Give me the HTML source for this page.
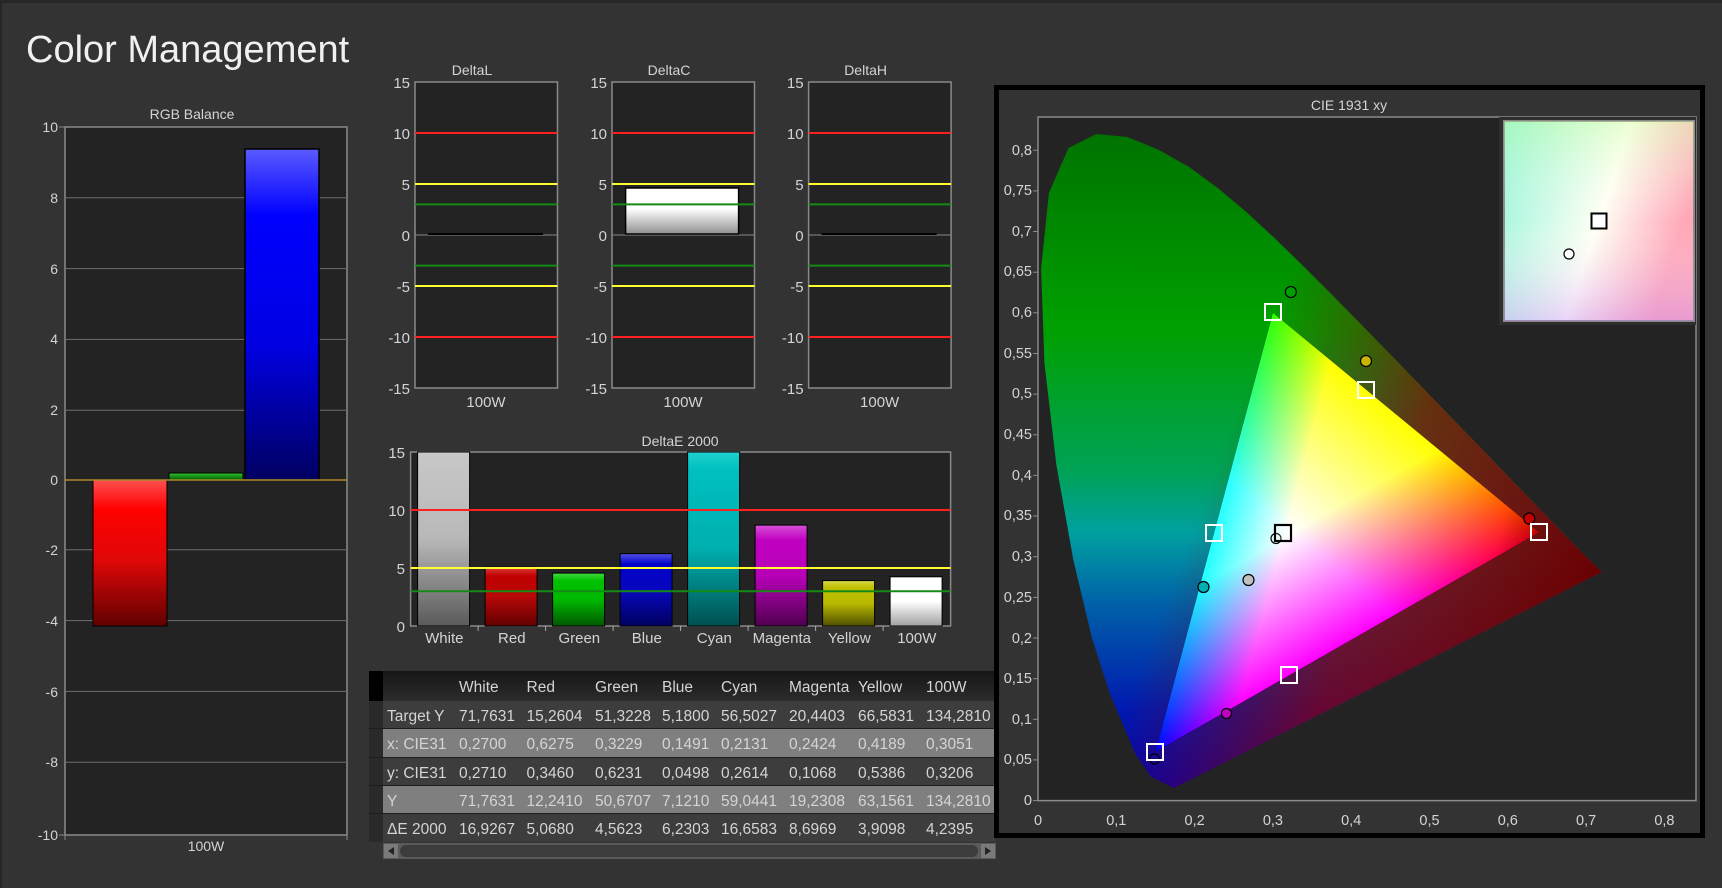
<!DOCTYPE html>
<html><head><meta charset="utf-8"><style>
html,body{margin:0;padding:0;background:#333;}
svg{display:block;}
text{font-family:"Liberation Sans",sans-serif;fill:#d4d4d4;}
</style></head><body>
<svg width="1722" height="888" viewBox="0 0 1722 888" xmlns="http://www.w3.org/2000/svg">
<defs>
<linearGradient id="rRed" x1="0" y1="0" x2="0" y2="1"><stop offset="0" stop-color="#ff5050"/><stop offset="0.2" stop-color="#ff0000"/><stop offset="0.55" stop-color="#e00808"/><stop offset="1" stop-color="#600000"/></linearGradient>
<linearGradient id="rBlue" x1="0" y1="0" x2="0" y2="1"><stop offset="0" stop-color="#5a5aff"/><stop offset="0.2" stop-color="#0000ff"/><stop offset="0.6" stop-color="#0000e0"/><stop offset="1" stop-color="#000060"/></linearGradient>
<linearGradient id="rGreen" x1="0" y1="0" x2="0" y2="1"><stop offset="0" stop-color="#30c030"/><stop offset="1" stop-color="#006000"/></linearGradient>
<linearGradient id="wC" x1="0" y1="0" x2="0" y2="1"><stop offset="0" stop-color="#ffffff"/><stop offset="0.45" stop-color="#ffffff"/><stop offset="1" stop-color="#909090"/></linearGradient>
<linearGradient id="eW" x1="0" y1="0" x2="0" y2="1"><stop offset="0" stop-color="#c8c8c8"/><stop offset="0.5" stop-color="#b8b8b8"/><stop offset="1" stop-color="#5a5a5a"/></linearGradient>
<linearGradient id="eR" x1="0" y1="0" x2="0" y2="1"><stop offset="0" stop-color="#e04040"/><stop offset="0.15" stop-color="#c00000"/><stop offset="0.5" stop-color="#b80808"/><stop offset="1" stop-color="#600000"/></linearGradient>
<linearGradient id="eG" x1="0" y1="0" x2="0" y2="1"><stop offset="0" stop-color="#40d840"/><stop offset="0.15" stop-color="#00c000"/><stop offset="0.5" stop-color="#00b800"/><stop offset="1" stop-color="#005800"/></linearGradient>
<linearGradient id="eB" x1="0" y1="0" x2="0" y2="1"><stop offset="0" stop-color="#5050e8"/><stop offset="0.15" stop-color="#0000c8"/><stop offset="0.5" stop-color="#0808c0"/><stop offset="1" stop-color="#000060"/></linearGradient>
<linearGradient id="eC" x1="0" y1="0" x2="0" y2="1"><stop offset="0" stop-color="#20d0d0"/><stop offset="0.1" stop-color="#00c0c0"/><stop offset="0.55" stop-color="#00b0b0"/><stop offset="1" stop-color="#005050"/></linearGradient>
<linearGradient id="eM" x1="0" y1="0" x2="0" y2="1"><stop offset="0" stop-color="#d850d8"/><stop offset="0.15" stop-color="#c000c0"/><stop offset="0.5" stop-color="#b800b8"/><stop offset="1" stop-color="#500050"/></linearGradient>
<linearGradient id="eY" x1="0" y1="0" x2="0" y2="1"><stop offset="0" stop-color="#d8d850"/><stop offset="0.15" stop-color="#c0c000"/><stop offset="0.5" stop-color="#b8b800"/><stop offset="1" stop-color="#505000"/></linearGradient>
<linearGradient id="eWh" x1="0" y1="0" x2="0" y2="1"><stop offset="0" stop-color="#ffffff"/><stop offset="0.5" stop-color="#ffffff"/><stop offset="1" stop-color="#a0a0a0"/></linearGradient>
<linearGradient id="hdr" x1="0" y1="0" x2="0" y2="1"><stop offset="0" stop-color="#161616"/><stop offset="1" stop-color="#2c2c2c"/></linearGradient>

<linearGradient id="horse" gradientUnits="userSpaceOnUse" x1="0" y1="130" x2="0" y2="790">
<stop offset="0" stop-color="#007200"/><stop offset="0.3" stop-color="#00a000"/><stop offset="0.52" stop-color="#00a258"/><stop offset="0.61" stop-color="#00a0a0"/><stop offset="0.72" stop-color="#0060a8"/><stop offset="0.88" stop-color="#0018b0"/><stop offset="1" stop-color="#0000b0"/></linearGradient>
<linearGradient id="redov" gradientUnits="userSpaceOnUse" x1="1230" y1="430" x2="1600" y2="570">
<stop offset="0" stop-color="#8a0000" stop-opacity="0"/><stop offset="0.45" stop-color="#900000" stop-opacity="0.7"/><stop offset="1" stop-color="#6a0000" stop-opacity="1"/></linearGradient>
<linearGradient id="gR" gradientUnits="userSpaceOnUse" x1="1539.1" y1="532.3" x2="1235.9" y2="451.2"><stop offset="0" stop-color="#c00000"/><stop offset="0.12" stop-color="#ff0000"/><stop offset="0.78" stop-color="#ff0000"/><stop offset="1" stop-color="#000000"/></linearGradient>
<linearGradient id="gG" gradientUnits="userSpaceOnUse" x1="1272.9" y1="312.8" x2="1433.2" y2="592.9"><stop offset="0" stop-color="#30ff00"/><stop offset="0.62" stop-color="#20ff00"/><stop offset="1" stop-color="#000000"/></linearGradient>
<linearGradient id="gB" gradientUnits="userSpaceOnUse" x1="1155.5" y1="751.8" x2="1418.5" y2="432.8"><stop offset="0" stop-color="#0000ff"/><stop offset="0.62" stop-color="#0000ff"/><stop offset="1" stop-color="#000000"/></linearGradient>
<linearGradient id="ins1" x1="0" y1="0" x2="1" y2="0.35"><stop offset="0" stop-color="#90f4d8"/><stop offset="0.6" stop-color="#fffff4"/><stop offset="1" stop-color="#ffa8b8"/></linearGradient>
<linearGradient id="ins2" x1="0" y1="0" x2="0" y2="1"><stop offset="0" stop-color="#c8ff90" stop-opacity="0.35"/><stop offset="0.5" stop-color="#ffffff" stop-opacity="0"/><stop offset="1" stop-color="#c080ff" stop-opacity="0.35"/></linearGradient>
</defs>

<rect x="0" y="0" width="1722" height="3" fill="#262626"/>
<rect x="0" y="0" width="2" height="888" fill="#262626"/>
<text x="26" y="62" font-size="38" style="fill:#f0f0f0">Color Management</text>

<!-- RGB Balance -->
<text x="192" y="119" font-size="14" text-anchor="middle">RGB Balance</text>
<rect x="65" y="127" width="282" height="708" fill="#232323" stroke="#8a8a8a" stroke-width="1.5"/>
<g stroke="#707070" stroke-width="1">
<line x1="65" x2="347" y1="197.8" y2="197.8"/><line x1="65" x2="347" y1="268.6" y2="268.6"/><line x1="65" x2="347" y1="339.4" y2="339.4"/><line x1="65" x2="347" y1="410.2" y2="410.2"/>
<line x1="65" x2="347" y1="549.8" y2="549.8"/><line x1="65" x2="347" y1="620.6" y2="620.6"/><line x1="65" x2="347" y1="691.4" y2="691.4"/><line x1="65" x2="347" y1="762.2" y2="762.2"/>
</g>
<g stroke="#8a8a8a"><line x1="59" x2="65" y1="127" y2="127"/><line x1="59" x2="65" y1="835" y2="835"/><line x1="65" x2="65" y1="835" y2="840"/><line x1="347" x2="347" y1="835" y2="840"/></g>
<rect x="93" y="480" width="74" height="146" fill="url(#rRed)" stroke="#000" stroke-width="1"/>
<rect x="169" y="473" width="74" height="7" fill="url(#rGreen)" stroke="#000" stroke-width="1"/>
<rect x="245" y="149" width="74" height="331" fill="url(#rBlue)" stroke="#000" stroke-width="1.5"/>
<line x1="65" x2="347" y1="480" y2="480" stroke="#b08a2a" stroke-width="1.5"/>
<g font-size="14" text-anchor="end">
<text x="58" y="132">10</text><text x="58" y="203">8</text><text x="58" y="274">6</text><text x="58" y="344">4</text><text x="58" y="415">2</text><text x="58" y="485">0</text>
<text x="58" y="555">-2</text><text x="58" y="626">-4</text><text x="58" y="697">-6</text><text x="58" y="767">-8</text><text x="58" y="840">-10</text>
</g>
<text x="206" y="851" font-size="14" text-anchor="middle">100W</text>

<!-- Delta charts -->
<g>
<text x="472" y="75" font-size="14" text-anchor="middle">DeltaL</text>
<rect x="415" y="82" width="142.5" height="306" fill="#232323" stroke="#8a8a8a" stroke-width="1.5"/>
<line x1="415" x2="557.5" y1="235" y2="235" stroke="#888"/>
<line x1="428" x2="543" y1="234" y2="234" stroke="#000" stroke-width="2"/>
<line x1="415" x2="557.5" y1="133" y2="133" stroke="#ff2020" stroke-width="2"/>
<line x1="415" x2="557.5" y1="337" y2="337" stroke="#ff2020" stroke-width="2"/>
<line x1="415" x2="557.5" y1="184" y2="184" stroke="#ffff30" stroke-width="2"/>
<line x1="415" x2="557.5" y1="286" y2="286" stroke="#ffff30" stroke-width="2"/>
<line x1="415" x2="557.5" y1="204.4" y2="204.4" stroke="#158a15" stroke-width="2"/>
<line x1="415" x2="557.5" y1="265.6" y2="265.6" stroke="#158a15" stroke-width="2"/>
<g font-size="15" text-anchor="end"><text x="410" y="88">15</text><text x="410" y="139">10</text><text x="410" y="190">5</text><text x="410" y="241">0</text><text x="410" y="292">-5</text><text x="410" y="343">-10</text><text x="410" y="394">-15</text></g>
<text x="486" y="407" font-size="15" text-anchor="middle">100W</text>
</g>
<g transform="translate(197 0)">
<text x="472" y="75" font-size="14" text-anchor="middle">DeltaC</text>
<rect x="415" y="82" width="142.5" height="306" fill="#232323" stroke="#8a8a8a" stroke-width="1.5"/>
<line x1="415" x2="557.5" y1="235" y2="235" stroke="#888"/>
<rect x="428.6" y="188" width="113" height="46" fill="url(#wC)" stroke="#000" stroke-width="1.5"/>
<line x1="415" x2="557.5" y1="133" y2="133" stroke="#ff2020" stroke-width="2"/>
<line x1="415" x2="557.5" y1="337" y2="337" stroke="#ff2020" stroke-width="2"/>
<line x1="415" x2="557.5" y1="184" y2="184" stroke="#ffff30" stroke-width="2"/>
<line x1="415" x2="557.5" y1="286" y2="286" stroke="#ffff30" stroke-width="2"/>
<line x1="415" x2="557.5" y1="204.4" y2="204.4" stroke="#158a15" stroke-width="2"/>
<line x1="415" x2="557.5" y1="265.6" y2="265.6" stroke="#158a15" stroke-width="2"/>
<g font-size="15" text-anchor="end"><text x="410" y="88">15</text><text x="410" y="139">10</text><text x="410" y="190">5</text><text x="410" y="241">0</text><text x="410" y="292">-5</text><text x="410" y="343">-10</text><text x="410" y="394">-15</text></g>
<text x="486" y="407" font-size="15" text-anchor="middle">100W</text>
</g>
<g transform="translate(393.6 0)">
<text x="472" y="75" font-size="14" text-anchor="middle">DeltaH</text>
<rect x="415" y="82" width="142.5" height="306" fill="#232323" stroke="#8a8a8a" stroke-width="1.5"/>
<line x1="415" x2="557.5" y1="235" y2="235" stroke="#888"/>
<line x1="428" x2="543" y1="234" y2="234" stroke="#000" stroke-width="2"/>
<line x1="415" x2="557.5" y1="133" y2="133" stroke="#ff2020" stroke-width="2"/>
<line x1="415" x2="557.5" y1="337" y2="337" stroke="#ff2020" stroke-width="2"/>
<line x1="415" x2="557.5" y1="184" y2="184" stroke="#ffff30" stroke-width="2"/>
<line x1="415" x2="557.5" y1="286" y2="286" stroke="#ffff30" stroke-width="2"/>
<line x1="415" x2="557.5" y1="204.4" y2="204.4" stroke="#158a15" stroke-width="2"/>
<line x1="415" x2="557.5" y1="265.6" y2="265.6" stroke="#158a15" stroke-width="2"/>
<g font-size="15" text-anchor="end"><text x="410" y="88">15</text><text x="410" y="139">10</text><text x="410" y="190">5</text><text x="410" y="241">0</text><text x="410" y="292">-5</text><text x="410" y="343">-10</text><text x="410" y="394">-15</text></g>
<text x="486" y="407" font-size="15" text-anchor="middle">100W</text>
</g>

<!-- DeltaE 2000 -->
<text x="680" y="446" font-size="14" text-anchor="middle">DeltaE 2000</text>
<rect x="410.6" y="452" width="540" height="174" fill="#232323" stroke="#8a8a8a" stroke-width="1.5"/>
<g stroke="#000" stroke-width="1">
<rect x="417.6" y="452" width="52" height="174" fill="url(#eW)"/>
<rect x="485.1" y="567.2" width="52" height="58.8" fill="url(#eR)"/>
<rect x="552.6" y="573.1" width="52" height="52.9" fill="url(#eG)"/>
<rect x="620.1" y="553.7" width="52" height="72.3" fill="url(#eB)"/>
<rect x="687.6" y="452" width="52" height="174" fill="url(#eC)"/>
<rect x="755.1" y="525.1" width="52" height="100.9" fill="url(#eM)"/>
<rect x="822.6" y="580.6" width="52" height="45.4" fill="url(#eY)"/>
<rect x="890.1" y="576.8" width="52" height="49.2" fill="url(#eWh)"/>
</g>
<line x1="410.6" x2="950.6" y1="510" y2="510" stroke="#ff2020" stroke-width="2"/>
<line x1="410.6" x2="950.6" y1="568" y2="568" stroke="#ffff30" stroke-width="2"/>
<line x1="410.6" x2="950.6" y1="591.2" y2="591.2" stroke="#158a15" stroke-width="2"/>
<g stroke="#aaa"><line x1="478.1" x2="478.1" y1="626" y2="631"/><line x1="545.6" x2="545.6" y1="626" y2="631"/><line x1="613.1" x2="613.1" y1="626" y2="631"/><line x1="680.6" x2="680.6" y1="626" y2="631"/><line x1="748.1" x2="748.1" y1="626" y2="631"/><line x1="815.6" x2="815.6" y1="626" y2="631"/><line x1="883.1" x2="883.1" y1="626" y2="631"/></g>
<g font-size="15" text-anchor="end"><text x="405" y="458">15</text><text x="405" y="516">10</text><text x="405" y="574">5</text><text x="405" y="632">0</text></g>
<g font-size="15" text-anchor="middle">
<text x="444.3" y="643">White</text><text x="511.8" y="643">Red</text><text x="579.3" y="643">Green</text><text x="646.8" y="643">Blue</text><text x="714.3" y="643">Cyan</text><text x="781.8" y="643">Magenta</text><text x="849.3" y="643">Yellow</text><text x="916.8" y="643">100W</text>
</g>

<!-- Table -->
<rect x="369" y="671" width="626" height="30" fill="url(#hdr)"/>
<rect x="369" y="671" width="14" height="30" fill="#000"/>
<rect x="369" y="701" width="626" height="28" fill="#3d3d3d"/>
<rect x="369" y="729" width="626" height="29" fill="#7f7f7f"/>
<rect x="369" y="758" width="626" height="28" fill="#3d3d3d"/>
<rect x="369" y="786" width="626" height="28" fill="#7f7f7f"/>
<rect x="369" y="814" width="626" height="28" fill="#3d3d3d"/>
<rect x="369" y="701" width="14" height="141" fill="#2a2a2a"/>
<g fill="#1e1e1e"><rect x="369" y="728" width="626" height="1"/><rect x="369" y="757" width="626" height="1"/><rect x="369" y="785" width="626" height="1"/><rect x="369" y="813" width="626" height="1"/></g>
<g font-size="15.5" style="fill:#f0f0f0">
<text y="692"><tspan x="459">White</tspan><tspan x="526.5">Red</tspan><tspan x="595">Green</tspan><tspan x="662">Blue</tspan><tspan x="721">Cyan</tspan><tspan x="789">Magenta</tspan><tspan x="858">Yellow</tspan><tspan x="926">100W</tspan></text>
<text y="721"><tspan x="387">Target Y</tspan><tspan x="459">71,7631</tspan><tspan x="526.5">15,2604</tspan><tspan x="595">51,3228</tspan><tspan x="662">5,1800</tspan><tspan x="721">56,5027</tspan><tspan x="789">20,4403</tspan><tspan x="858">66,5831</tspan><tspan x="926">134,2810</tspan></text>
<text y="749"><tspan x="387">x: CIE31</tspan><tspan x="459">0,2700</tspan><tspan x="526.5">0,6275</tspan><tspan x="595">0,3229</tspan><tspan x="662">0,1491</tspan><tspan x="721">0,2131</tspan><tspan x="789">0,2424</tspan><tspan x="858">0,4189</tspan><tspan x="926">0,3051</tspan></text>
<text y="778"><tspan x="387">y: CIE31</tspan><tspan x="459">0,2710</tspan><tspan x="526.5">0,3460</tspan><tspan x="595">0,6231</tspan><tspan x="662">0,0498</tspan><tspan x="721">0,2614</tspan><tspan x="789">0,1068</tspan><tspan x="858">0,5386</tspan><tspan x="926">0,3206</tspan></text>
<text y="806"><tspan x="387">Y</tspan><tspan x="459">71,7631</tspan><tspan x="526.5">12,2410</tspan><tspan x="595">50,6707</tspan><tspan x="662">7,1210</tspan><tspan x="721">59,0441</tspan><tspan x="789">19,2308</tspan><tspan x="858">63,1561</tspan><tspan x="926">134,2810</tspan></text>
<text y="834"><tspan x="387">ΔE 2000</tspan><tspan x="459">16,9267</tspan><tspan x="526.5">5,0680</tspan><tspan x="595">4,5623</tspan><tspan x="662">6,2303</tspan><tspan x="721">16,6583</tspan><tspan x="789">8,6969</tspan><tspan x="858">3,9098</tspan><tspan x="926">4,2395</tspan></text>
</g>
<rect x="383" y="843" width="613" height="16" fill="#5a5a5a"/>
<rect x="400" y="845" width="578" height="12" rx="6" fill="#3c3c3c"/>
<rect x="384" y="844" width="14" height="14" fill="#7a7a7a"/><path d="M394 847 L388 851 L394 855 Z" fill="#222"/>
<rect x="981" y="844" width="14" height="14" fill="#7a7a7a"/><path d="M985 847 L991 851 L985 855 Z" fill="#222"/>

<!-- CIE panel -->
<rect x="996.5" y="87.5" width="706" height="748" fill="#333" stroke="#000" stroke-width="5"/>
<text x="1349" y="110" font-size="14" text-anchor="middle">CIE 1931 xy</text>
<rect x="1038" y="117" width="658" height="683.6" fill="#232323" stroke="#8a8a8a" stroke-width="1.5"/>
<path d="M1174,788 L1150.8,776.5 L1135.2,753.6 L1109.5,692.7 L1091.8,637.4 L1073.5,560.8 L1056.4,465.1 L1044.4,362.9 L1041.1,268.2 L1048.9,193 L1068.5,148 L1096.2,134 L1127.4,137 L1159.1,150 L1189,167 L1217.8,188 L1246.1,211.7 L1274.2,237.8 L1302.1,264.9 L1330.1,292.9 L1358,321.3 L1385.7,349.6 L1412.9,377.7 L1439.3,405 L1464.6,431.2 L1488.4,455.7 L1510.1,478.2 L1528.9,497.8 L1545.5,514.9 L1559.3,529.1 L1570.5,540.7 L1579.4,550 L1586.6,557.3 L1594,564.5 L1602,572 Z" fill="url(#horse)"/>
<path d="M1174,788 L1150.8,776.5 L1135.2,753.6 L1109.5,692.7 L1091.8,637.4 L1073.5,560.8 L1056.4,465.1 L1044.4,362.9 L1041.1,268.2 L1048.9,193 L1068.5,148 L1096.2,134 L1127.4,137 L1159.1,150 L1189,167 L1217.8,188 L1246.1,211.7 L1274.2,237.8 L1302.1,264.9 L1330.1,292.9 L1358,321.3 L1385.7,349.6 L1412.9,377.7 L1439.3,405 L1464.6,431.2 L1488.4,455.7 L1510.1,478.2 L1528.9,497.8 L1545.5,514.9 L1559.3,529.1 L1570.5,540.7 L1579.4,550 L1586.6,557.3 L1594,564.5 L1602,572 Z" fill="url(#redov)"/>
<g style="isolation:isolate">
<polygon points="1539.1,532.3 1272.9,312.8 1155.5,751.8" fill="#000"/>
<polygon points="1539.1,532.3 1272.9,312.8 1155.5,751.8" fill="url(#gR)" style="mix-blend-mode:screen"/>
<polygon points="1539.1,532.3 1272.9,312.8 1155.5,751.8" fill="url(#gG)" style="mix-blend-mode:screen"/>
<polygon points="1539.1,532.3 1272.9,312.8 1155.5,751.8" fill="url(#gB)" style="mix-blend-mode:screen"/>
</g>
<rect x="1499" y="117" width="197" height="208" fill="#2e2e2e"/>
<rect x="1504" y="121" width="190" height="200" fill="url(#ins1)" stroke="#8a8a8a" stroke-width="2"/>
<rect x="1504" y="121" width="190" height="200" fill="url(#ins2)"/>
<rect x="1591.5" y="213.5" width="15" height="15" fill="#fff" stroke="#000" stroke-width="2"/>
<circle cx="1569" cy="254" r="5" fill="#fff" stroke="#000" stroke-width="1.2"/>
<g stroke="#000" stroke-width="1.2">
<circle cx="1290.8" cy="292" r="5.5" fill="#00a000"/>
<circle cx="1366" cy="361" r="5.5" fill="#c8b400"/>
<circle cx="1529.3" cy="518.5" r="5.5" fill="#c00000"/>
<circle cx="1203.5" cy="587" r="5.5" fill="#00b0b0"/>
<circle cx="1248.5" cy="580" r="5.5" fill="#c0c0c0"/>
<circle cx="1226.5" cy="713.5" r="5" fill="#c000c0"/>
<circle cx="1276" cy="538.5" r="5" fill="none"/>
<circle cx="1154.5" cy="759" r="5" fill="none"/>
</g>
<g fill="none" stroke="#fff" stroke-width="2">
<rect x="1265" y="304" width="16" height="16"/>
<rect x="1358" y="382" width="16" height="16"/>
<rect x="1531" y="524" width="16" height="16"/>
<rect x="1206" y="525" width="16" height="16"/>
<rect x="1281" y="667" width="16" height="16"/>
<rect x="1147" y="744" width="16" height="16"/>
</g>
<rect x="1275" y="525" width="16" height="16" fill="#fff" fill-opacity="0.15" stroke="#000" stroke-width="2.2"/>
<g font-size="14.5" text-anchor="end">
<text x="1032" y="805">0</text><text x="1032" y="764">0,05</text><text x="1032" y="724">0,1</text><text x="1032" y="683">0,15</text><text x="1032" y="643">0,2</text><text x="1032" y="602">0,25</text><text x="1032" y="561">0,3</text><text x="1032" y="520">0,35</text><text x="1032" y="480">0,4</text><text x="1032" y="439">0,45</text><text x="1032" y="398">0,5</text><text x="1032" y="358">0,55</text><text x="1032" y="317">0,6</text><text x="1032" y="276">0,65</text><text x="1032" y="236">0,7</text><text x="1032" y="195">0,75</text><text x="1032" y="155">0,8</text>
</g>
<g stroke="#8a8a8a"><line x1="1033" x2="1038" y1="800.6" y2="800.6"/><line x1="1033" x2="1038" y1="759.9" y2="759.9"/><line x1="1033" x2="1038" y1="719.3" y2="719.3"/><line x1="1033" x2="1038" y1="678.7" y2="678.7"/><line x1="1033" x2="1038" y1="638" y2="638"/><line x1="1033" x2="1038" y1="597.4" y2="597.4"/><line x1="1033" x2="1038" y1="556.7" y2="556.7"/><line x1="1033" x2="1038" y1="516" y2="516"/><line x1="1033" x2="1038" y1="475.4" y2="475.4"/><line x1="1033" x2="1038" y1="434.8" y2="434.8"/><line x1="1033" x2="1038" y1="394.1" y2="394.1"/><line x1="1033" x2="1038" y1="353.5" y2="353.5"/><line x1="1033" x2="1038" y1="312.8" y2="312.8"/><line x1="1033" x2="1038" y1="272.2" y2="272.2"/><line x1="1033" x2="1038" y1="231.5" y2="231.5"/><line x1="1033" x2="1038" y1="190.9" y2="190.9"/><line x1="1033" x2="1038" y1="150.2" y2="150.2"/></g>
<g font-size="14.5" text-anchor="middle">
<text x="1038" y="825">0</text><text x="1116.3" y="825">0,1</text><text x="1194.6" y="825">0,2</text><text x="1272.9" y="825">0,3</text><text x="1351.2" y="825">0,4</text><text x="1429.5" y="825">0,5</text><text x="1507.8" y="825">0,6</text><text x="1586.1" y="825">0,7</text><text x="1664.4" y="825">0,8</text>
</g>
</svg>
</body></html>
